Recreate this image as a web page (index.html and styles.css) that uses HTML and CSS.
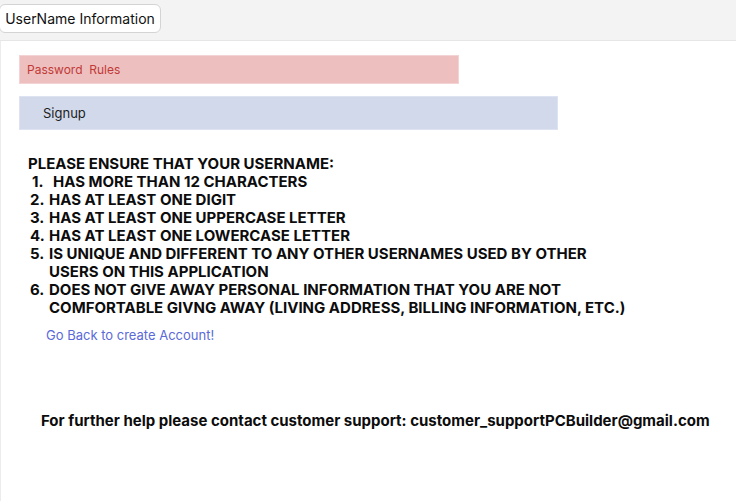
FILE: index.html
```html
<!DOCTYPE html>
<html>
<head>
<meta charset="utf-8">
<link rel="stylesheet" href="styles.css">
</head>
<body>
<header class="topbar">
  <button class="tab-btn">UserName Information</button>
</header>
<main class="panel">
  <div class="bar bar-rules">Password&nbsp; Rules</div>
  <div class="bar bar-signup">Signup</div>
  <section class="rules">
    <div class="rules-title">PLEASE ENSURE THAT YOUR USERNAME:</div>
    <div class="rule first"><span class="num">1.</span><span class="txt">HAS MORE THAN 12 CHARACTERS</span></div>
    <div class="rule"><span class="num">2.</span><span class="txt">HAS AT LEAST ONE DIGIT</span></div>
    <div class="rule"><span class="num">3.</span><span class="txt">HAS AT LEAST ONE UPPERCASE LETTER</span></div>
    <div class="rule"><span class="num">4.</span><span class="txt">HAS AT LEAST ONE LOWERCASE LETTER</span></div>
    <div class="rule"><span class="num">5.</span><span class="txt">IS UNIQUE AND DIFFERENT TO ANY OTHER USERNAMES USED BY OTHER<br>USERS ON THIS APPLICATION</span></div>
    <div class="rule"><span class="num">6.</span><span class="txt">DOES NOT GIVE AWAY PERSONAL INFORMATION THAT YOU ARE NOT<br>COMFORTABLE GIVNG AWAY (LIVING ADDRESS, BILLING INFORMATION, ETC.)</span></div>
  </section>
  <a class="back-link" href="#">Go Back to create Account!</a>
  <p class="support">For further help please contact customer support: customer_supportPCBuilder@gmail.com</p>
</main>
</body>
</html>
```
FILE: styles.css
```css
* { box-sizing: border-box; }
html, body { margin: 0; padding: 0; height: 100%; }
body {
  font-family: Inter, "Noto Sans", sans-serif;
  background: #ffffff;
  color: #111;
}
.topbar {
  height: 41px;
  background: #f3f3f3;
  border-bottom: 1px solid #e6e6e6;
  padding-top: 4px;
}
.tab-btn {
  height: 29px;
  width: 162px;
  background: #fff;
  border: 1px solid #d4d4d4;
  border-radius: 6px;
  font-family: Inter, sans-serif;
  font-size: 14px;
  color: #111;
  padding: 0;
  margin-left: -1px;
}
.panel {
  border-left: 1px solid #ececec;
  padding: 14px 0 0 18px;
  min-height: calc(100% - 41px);
}
.bar {
  display: flex;
  align-items: center;
}
.bar-rules {
  width: 440px;
  height: 29px;
  background: #edbfbf;
  border: 1px solid #f3d3d3;
  color: #c13a36;
  font-size: 12px;
  padding-left: 7px;
}
.bar-signup {
  margin-top: 12px;
  width: 539px;
  height: 34px;
  background: #d1d9eb;
  border: 1px solid #dde3f1;
  color: #1d1d1d;
  font-size: 13px;
  padding-left: 23px;
}
.rules {
  margin-top: 25px;
  padding-left: 9px;
  font-weight: 700;
  font-size: 15px;
  line-height: 18px;
  color: #0c0c0c;
}
.rules-title { margin-bottom: 0; }
.rule {
  display: flex;
  padding-left: 2px;
}
.num { width: 19px; flex: none; }
.rule.first { padding-left: 4px; }
.rule.first .num { width: 21px; }
.back-link {
  display: block;
  margin-top: 10px;
  margin-left: 27px;
  color: #5a6ad8;
  font-size: 13px;
  text-decoration: none;
}
.support {
  margin: 68px 0 0 22px;
  font-weight: 700;
  font-size: 15px;
  letter-spacing: 0;
  color: #0c0c0c;
}
```
